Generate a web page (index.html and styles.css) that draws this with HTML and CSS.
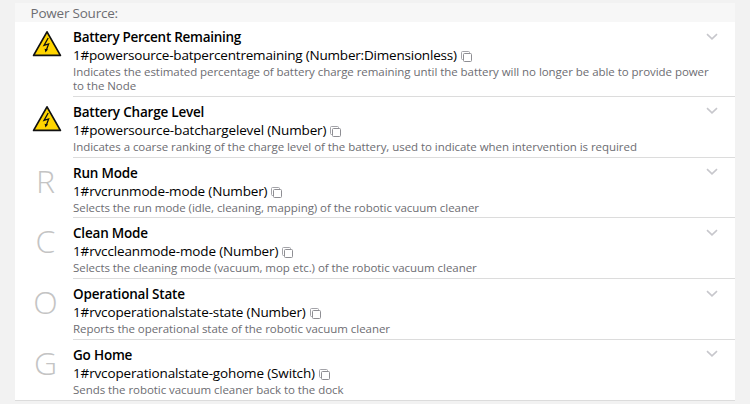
FILE: index.html
```
<!DOCTYPE html>
<html lang="en">
<head>
    <meta charset="UTF-8">
    <meta name="viewport" content="width=device-width, initial-scale=1.0">
    <title>Channels</title>
    <link rel="stylesheet" href="styles.css">
</head>
<body>
    <svg width="0" height="0" class="icon-defs">
        <symbol id="energy" viewBox="0 0 30 28">
            <path d="M15 1.8 28.4 25.4H1.6Z" fill="#ffd500" stroke="#111" stroke-width="1.7" stroke-linejoin="round"/>
            <path d="M16.2 8 12 15.4 16.6 14 14.2 20.5" fill="none" stroke="#111" stroke-width="1.3"/>
            <path d="M12.6 18.8 13.4 22.6 16 19.6Z" fill="#111"/>
        </symbol>
        <symbol id="copy" viewBox="0 0 12 12">
            <path d="M2.5 8.5H1.5Q.5 8.5 .5 7.5V1.5Q.5 .5 1.5 .5H7.5Q8.5 .5 8.5 1.5V2.5" fill="none" stroke="#a3a3a8"/>
            <rect x="2.5" y="2.5" width="8" height="8" rx="1" fill="none" stroke="#8e8e93"/>
        </symbol>
        <symbol id="chevron" viewBox="0 0 12 8">
            <path d="M1 1.2 6 5.8 11 1.2" fill="none" stroke="#c7c7cc" stroke-width="1.6"/>
        </symbol>
    </svg>
    <div class="channel-group">
        <div class="group-title">Power Source:</div>
        <ul class="channel-list">
            <li class="channel channel-long">
                <div class="media"><svg class="energy"><use href="#energy"/></svg></div>
                <div class="inner">
                    <div class="title">Battery Percent Remaining</div>
                    <div class="channel-id">1#powersource-batpercentremaining (Number:Dimensionless)<svg class="copy"><use href="#copy"/></svg></div>
                    <div class="description">Indicates the estimated percentage of battery charge remaining until the battery will no longer be able to provide power<br>to the Node</div>
                    <svg class="chevron"><use href="#chevron"/></svg>
                </div>
            </li>
            <li class="channel">
                <div class="media"><svg class="energy"><use href="#energy"/></svg></div>
                <div class="inner">
                    <div class="title">Battery Charge Level</div>
                    <div class="channel-id">1#powersource-batchargelevel (Number)<svg class="copy"><use href="#copy"/></svg></div>
                    <div class="description">Indicates a coarse ranking of the charge level of the battery, used to indicate when intervention is required</div>
                    <svg class="chevron"><use href="#chevron"/></svg>
                </div>
            </li>
            <li class="channel">
                <div class="media">R</div>
                <div class="inner">
                    <div class="title">Run Mode</div>
                    <div class="channel-id">1#rvcrunmode-mode (Number)<svg class="copy"><use href="#copy"/></svg></div>
                    <div class="description">Selects the run mode (idle, cleaning, mapping) of the robotic vacuum cleaner</div>
                    <svg class="chevron"><use href="#chevron"/></svg>
                </div>
            </li>
            <li class="channel">
                <div class="media">C</div>
                <div class="inner">
                    <div class="title">Clean Mode</div>
                    <div class="channel-id">1#rvccleanmode-mode (Number)<svg class="copy"><use href="#copy"/></svg></div>
                    <div class="description">Selects the cleaning mode (vacuum, mop etc.) of the robotic vacuum cleaner</div>
                    <svg class="chevron"><use href="#chevron"/></svg>
                </div>
            </li>
            <li class="channel">
                <div class="media">O</div>
                <div class="inner">
                    <div class="title">Operational State</div>
                    <div class="channel-id">1#rvcoperationalstate-state (Number)<svg class="copy"><use href="#copy"/></svg></div>
                    <div class="description">Reports the operational state of the robotic vacuum cleaner</div>
                    <svg class="chevron"><use href="#chevron"/></svg>
                </div>
            </li>
            <li class="channel">
                <div class="media">G</div>
                <div class="inner">
                    <div class="title">Go Home</div>
                    <div class="channel-id">1#rvcoperationalstate-gohome (Switch)<svg class="copy"><use href="#copy"/></svg></div>
                    <div class="description">Sends the robotic vacuum cleaner back to the dock</div>
                    <svg class="chevron"><use href="#chevron"/></svg>
                </div>
            </li>
        </ul>
    </div>
</body>
</html>
```
FILE: styles.css
```
body {
    font-family: "Open Sans", "Noto Sans", sans-serif;
    background-color: #f2f2f2;
    margin: 0;
    padding: 3px 15px 0;
    color: #000;
}

.icon-defs {
    display: none;
}

.group-title {
    height: 19px;
    line-height: 20px;
    padding-left: 15.5px;
    background-color: #f7f7f7;
    color: #6d6d72;
    font-size: 13.5px;
    letter-spacing: -0.22px;
}

.channel-list {
    list-style: none;
    margin: 0;
    padding: 0;
    background-color: #fff;
    border-bottom: 1px solid #dcdcdc;
}

.channel {
    display: flex;
}

.media {
    width: 33px;
    padding: 7px 11px 0 14px;
    text-align: center;
    font-size: 32px;
    font-weight: 300;
    line-height: 32px;
    color: #c4c4c4;
}

.energy {
    display: block;
    width: 30px;
    height: 28px;
    margin: 1px 0 0 3px;
}

.inner {
    flex: 1;
    position: relative;
    padding: 6px 0 2.8px;
    white-space: nowrap;
    border-bottom: 1px solid #dcdcdc;
}

.channel:last-child .inner {
    border-bottom: none;
}

.title {
    font-size: 13.5px;
    font-weight: 600;
    line-height: 18px;
    letter-spacing: -0.2px;
}

.channel-id {
    font-size: 13.5px;
    line-height: 19px;
    height: 19px;
    letter-spacing: -0.15px;
}

.channel-long .title {
    letter-spacing: -0.27px;
}

.channel-long .channel-id {
    letter-spacing: -0.2px;
}

.description {
    font-size: 11.5px;
    line-height: 14px;
    letter-spacing: -0.05px;
    color: #6d6d72;
}

.copy {
    width: 12px;
    height: 12px;
    margin-left: 4px;
    vertical-align: -3px;
}

.chevron {
    position: absolute;
    top: 10.5px;
    right: 17px;
    width: 12px;
    height: 8px;
}
```
